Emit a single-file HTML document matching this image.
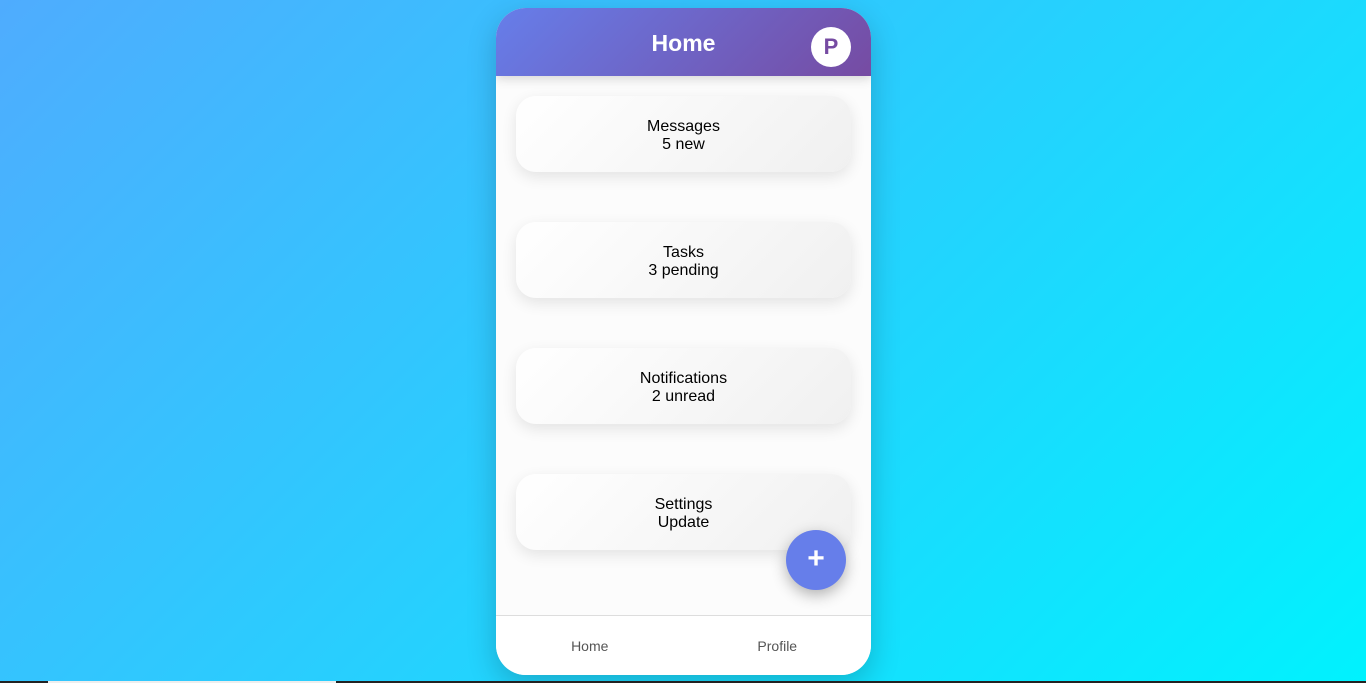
<!DOCTYPE html>
<html><head><style>
html,body{margin:0;height:683px;overflow:hidden}
body{background:linear-gradient(135deg,#4facfe 0%,#00f2fe 100%);font-family:"Liberation Sans",sans-serif;position:relative;width:1366px}
.phone{position:absolute;left:496px;top:8px;width:375px;height:667px;background:#fcfcfc;border-radius:30px;overflow:hidden;box-shadow:0 10px 30px rgba(0,0,0,.2)}
.hdr{height:68px;background:linear-gradient(135deg,#667eea,#764ba2);color:#fff;text-align:center;line-height:70px;font-size:23px;font-weight:bold;position:relative;box-shadow:0 3px 10px rgba(0,0,0,.15);z-index:2}
.av{position:absolute;right:20px;top:19px;width:40px;height:40px;border-radius:50%;background:#fff;color:#764ba2;font-size:22px;line-height:40px;text-align:center}
.card{position:absolute;left:20px;width:335px;height:76px;border-radius:20px;background:linear-gradient(135deg,#fff,#f0f0f0);box-shadow:0 5px 15px rgba(0,0,0,.1);text-align:center;font-size:16px;line-height:18px;color:#000;box-sizing:border-box;padding-top:22px}
.fab{position:absolute;left:290px;top:522px;width:60px;height:60px;border-radius:50%;background:#667eea;color:#fff;font-size:30px;font-weight:bold;line-height:58px;text-align:center;box-shadow:0 5px 15px rgba(0,0,0,.3)}
.nav{position:absolute;left:0;top:607px;width:375px;height:60px;border-top:1px solid #ddd;background:#fff;display:flex}
.nav div{flex:1;text-align:center;line-height:60px;font-size:14px;color:#555}
.bar{position:absolute;left:0;top:681px;width:1366px;height:2px;background:#222}
</style></head><body>
<div class="phone">
<div class="hdr">Home<div class="av">P</div></div>
<div class="card" style="top:88px">Messages<br>5 new</div>
<div class="card" style="top:214px">Tasks<br>3 pending</div>
<div class="card" style="top:340px">Notifications<br>2 unread</div>
<div class="card" style="top:466px">Settings<br>Update</div>
<div class="fab">+</div>
<div class="nav"><div>Home</div><div>Profile</div></div>
</div>
<div class="bar"></div>
<div style="position:absolute;left:48px;top:681px;width:288px;height:2px;background:#eee"></div>
</body></html>
